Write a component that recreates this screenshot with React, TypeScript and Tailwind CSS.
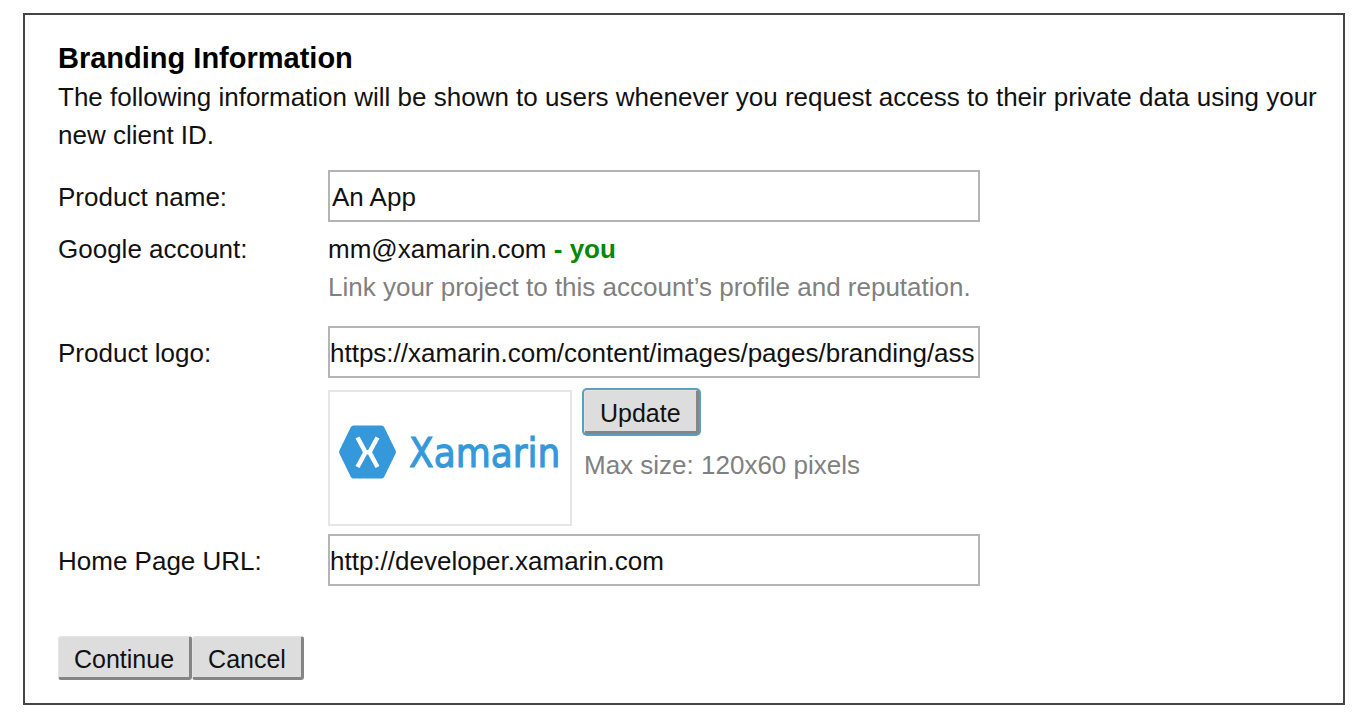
import { useState } from "react";

const inputClass =
  "block h-[52px] w-full max-w-[652px] rounded-none border-2 border-[#b4b4b4] bg-white pt-[2px] text-[26px] leading-[38px] text-[#111] outline-none";
const buttonClass =
  "h-11 rounded-[3px] border-t border-r-[3px] border-b-[3px] border-l border-t-[#e4e4e4] border-r-[#858585] border-b-[#858585] border-l-[#e4e4e4] bg-[#dddddd] pt-1 pr-[15px] pl-[15px] text-[25px] leading-[36px] text-[#111]";

function XamarinLogo() {
  return (
    <svg viewBox="0 0 240 132" className="block h-full w-full" role="img" aria-label="Xamarin">
      <path
        d="M23.500 33.500h28q1.700 0 2.600 1.600l11.400 23.100q.9 1.800 0 3.600l-11.400 23.100q-.9 1.600-2.600 1.600h-28q-1.700 0-2.600-1.600l-11.400-23.100q-.9-1.800 0-3.600l11.400-23.100q.9-1.600 2.600-1.600z"
        fill="#3498db"
      />
      <path
        d="M27.500 45.500l8 14.700-8 14.800M47.500 45.500l-8 14.700 8 14.800M35.500 60.200h4"
        fill="none"
        stroke="#fff"
        strokeWidth="4.500"
      />
      <text
        x="79"
        y="75"
        fontFamily="'DejaVu Sans Condensed', Lato, sans-serif"
        fontSize="40"
        fill="#3498db"
        stroke="#3498db"
        strokeWidth="1"
      >
        Xamarin
      </text>
    </svg>
  );
}

export default function App() {
  const [name, setName] = useState("An App");
  const [logo, setLogo] = useState("https://xamarin.com/content/images/pages/branding/ass");
  const [home, setHome] = useState("http://developer.xamarin.com");

  return (
    <main className="bg-white py-[13px] pr-[22px] pl-[23px] font-['Liberation_Sans',Arial,sans-serif] text-[26px] leading-[38px] text-[#111]">
      <form
        className="border-2 border-[#444] pt-[23px] pr-5 pb-[23px] pl-[33px]"
        onSubmit={(e) => e.preventDefault()}
      >
        <h1 className="text-[29px] leading-[40px] font-bold text-black">Branding Information</h1>
        <p>
          The following information will be shown to users whenever you request access to their private data using
          your new client ID.
        </p>

        <div className="mt-4 grid grid-cols-[270px_minmax(0,1fr)]">
          <label htmlFor="product-name" className="pt-2">
            Product name:
          </label>
          <input
            id="product-name"
            type="text"
            value={name}
            onChange={(e) => setName(e.target.value)}
            className={`${inputClass} px-[2px]`}
          />

          <div className="mt-2">Google account:</div>
          <div className="mt-2">
            <div>
              mm@xamarin.com <strong className="font-bold text-[#078807]">- you</strong>
            </div>
            <div className="text-[#808080]">Link your project to this account’s profile and reputation.</div>
          </div>

          <label htmlFor="product-logo" className="mt-5 pt-2">
            Product logo:
          </label>
          <div className="mt-5">
            <input
              id="product-logo"
              type="text"
              value={logo}
              onChange={(e) => setLogo(e.target.value)}
              className={`${inputClass} px-0`}
            />
            <div className="mt-3 flex gap-3">
              <div className="h-[136px] w-[244px] shrink-0 border-2 border-[#e6e6e6]">
                <XamarinLogo />
              </div>
              <div>
                <button type="button" className={`${buttonClass} block ring-2 ring-[#5a9fbd]`}>
                  Update
                </button>
                <div className="mt-3 text-[#808080]">Max size: 120x60 pixels</div>
              </div>
            </div>
          </div>

          <label htmlFor="home-page" className="mt-2 pt-2">
            Home Page URL:
          </label>
          <div className="mt-2">
            <input
              id="home-page"
              type="text"
              value={home}
              onChange={(e) => setHome(e.target.value)}
              className={`${inputClass} px-0`}
            />
          </div>
        </div>

        <div className="mt-[50px] flex">
          <button type="submit" className={buttonClass}>
            Continue
          </button>
          <button type="button" className={buttonClass}>
            Cancel
          </button>
        </div>
      </form>
    </main>
  );
}
